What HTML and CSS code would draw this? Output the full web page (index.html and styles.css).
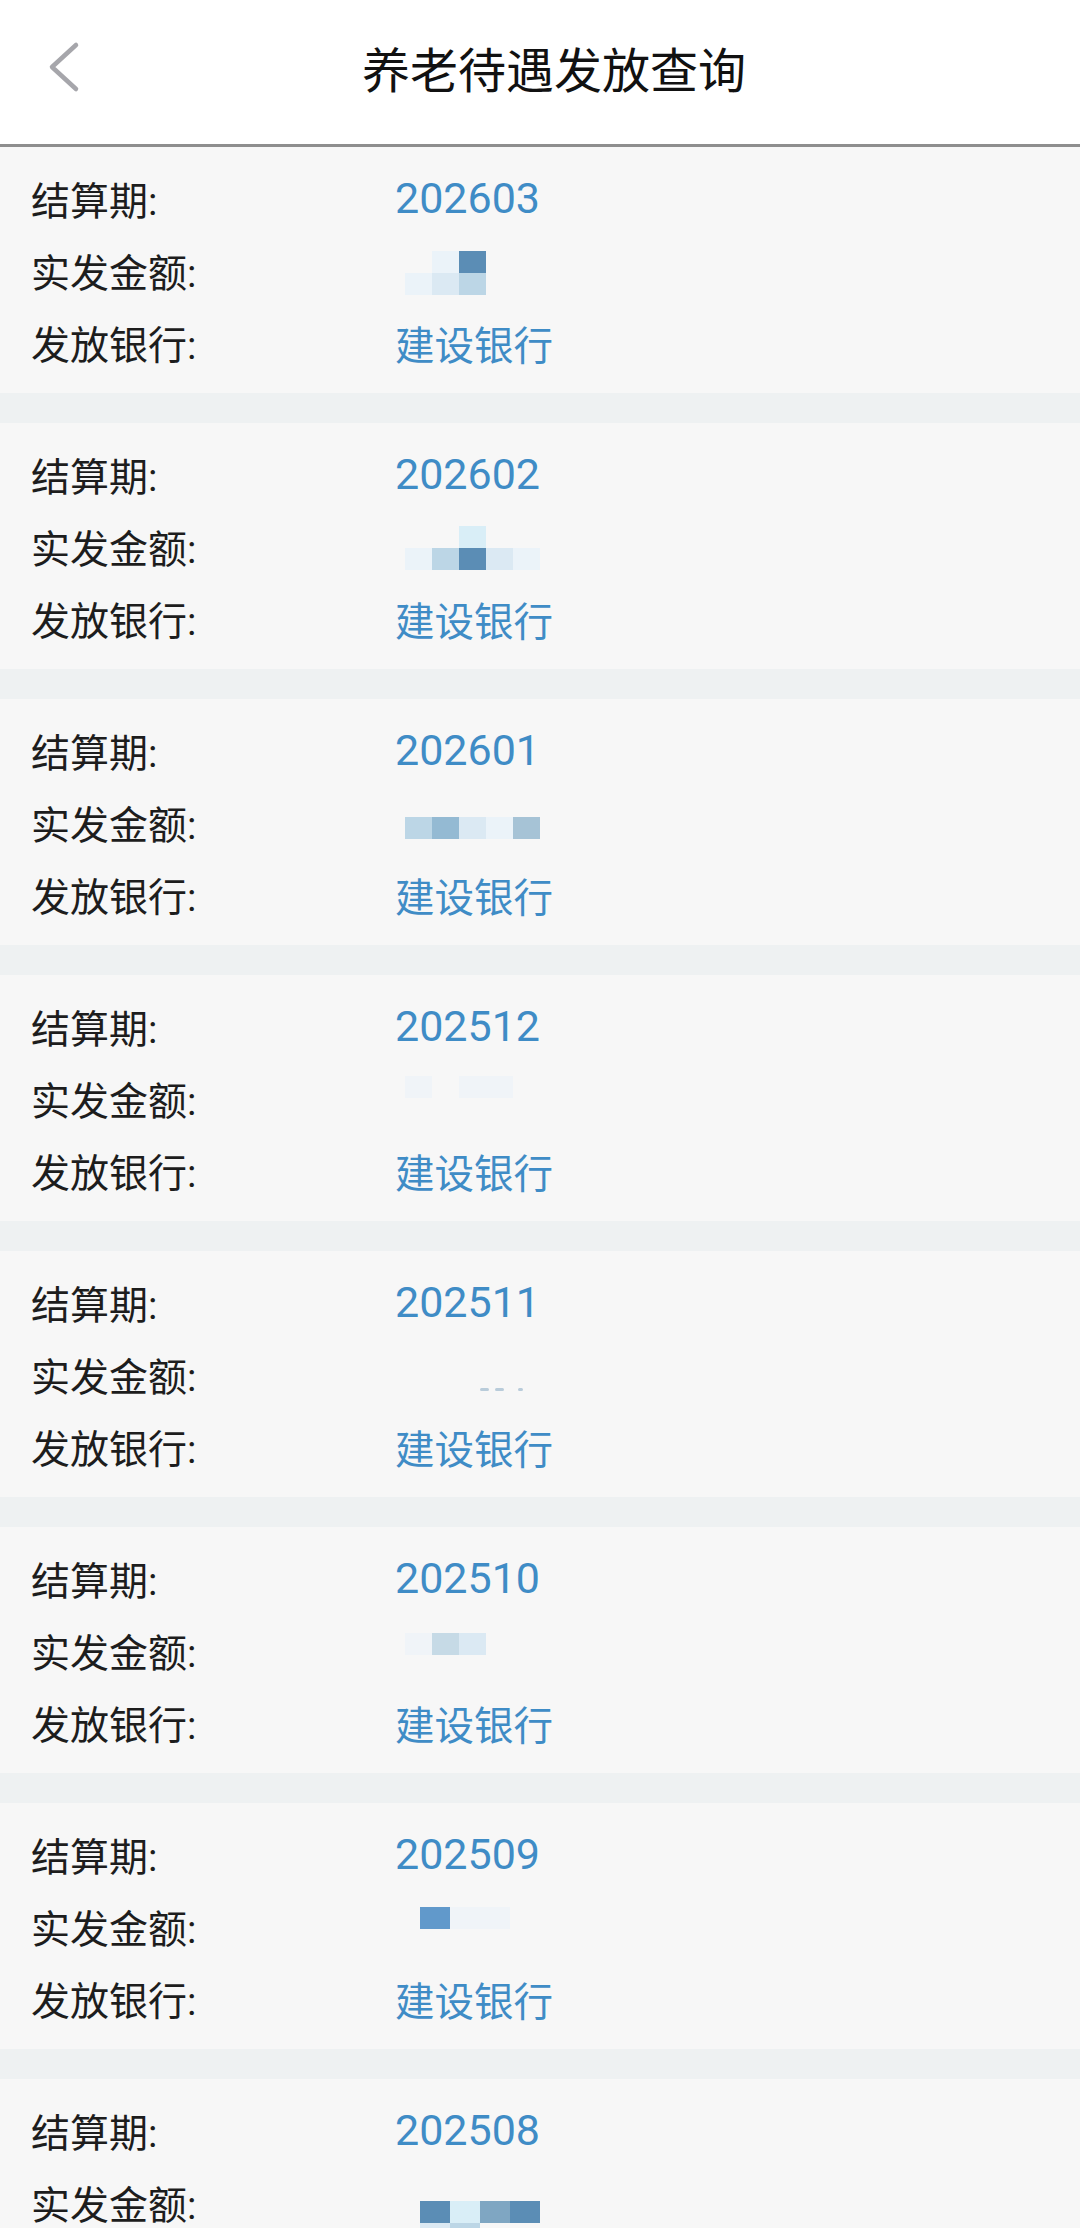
FILE: index.html
```html
<!DOCTYPE html>
<html lang="zh-CN">
<head>
    <meta charset="UTF-8">
    <meta name="viewport" content="width=device-width, initial-scale=1.0">
    <title>养老待遇发放查询</title>
    <link rel="stylesheet" href="styles.css">
</head>
<body>

    <div class="topbar">
        <div class="back">
            <svg width="40" height="60" viewBox="0 0 40 60">
                <polyline points="32,8 8,30 32,52" fill="none" stroke="#a6a6ab" stroke-width="4.5" stroke-linecap="round" stroke-linejoin="round"/>
            </svg>
        </div>
        <h1>养老待遇发放查询</h1>
        <div></div>
    </div>

    <div id="list">
        <div class="record">
            <div class="row"><span class="label">结算期:</span><span class="value num">202603</span></div>
            <div class="row"><span class="label">实发金额:</span>
                <span class="value">
                    <span class="mosaic sh-dn3">
                        <i></i><i class="m1"></i><i class="m5"></i><i></i>
                        <i></i><i class="m1"></i><i class="m2"></i><i class="m3"></i>
                    </span>
                </span>
            </div>
            <div class="row"><span class="label">发放银行:</span><span class="value">建设银行</span></div>
        </div>

        <div class="record">
            <div class="row"><span class="label">结算期:</span><span class="value num">202602</span></div>
            <div class="row"><span class="label">实发金额:</span>
                <span class="value">
                    <span class="mosaic sh-dn2">
                        <i></i><i></i><i class="m2c"></i><i></i><i></i>
                        <i class="m1"></i><i class="m3"></i><i class="m5"></i><i class="m2"></i><i class="m1"></i>
                    </span>
                </span>
            </div>
            <div class="row"><span class="label">发放银行:</span><span class="value">建设银行</span></div>
        </div>

        <div class="record">
            <div class="row"><span class="label">结算期:</span><span class="value num">202601</span></div>
            <div class="row"><span class="label">实发金额:</span>
                <span class="value">
                    <span class="mosaic sh-dn6">
                        <i class="m3"></i><i class="m4"></i><i class="m2"></i><i class="m1"></i><i class="m3b"></i>
                    </span>
                </span>
            </div>
            <div class="row"><span class="label">发放银行:</span><span class="value">建设银行</span></div>
        </div>

        <div class="record">
            <div class="row"><span class="label">结算期:</span><span class="value num">202512</span></div>
            <div class="row"><span class="label">实发金额:</span>
                <span class="value">
                    <span class="mosaic">
                        <i class="m0"></i><i></i><i class="m0"></i>
                        <i class="m0"></i><i></i><i></i>
                    </span>
                </span>
            </div>
            <div class="row"><span class="label">发放银行:</span><span class="value">建设银行</span></div>
        </div>

        <div class="record">
            <div class="row"><span class="label">结算期:</span><span class="value num">202511</span></div>
            <div class="row"><span class="label">实发金额:</span>
                <span class="value">
                    <span class="dashes"><b></b><b></b><b class="short"></b></span>
                </span>
            </div>
            <div class="row"><span class="label">发放银行:</span><span class="value">建设银行</span></div>
        </div>

        <div class="record">
            <div class="row"><span class="label">结算期:</span><span class="value num">202510</span></div>
            <div class="row"><span class="label">实发金额:</span>
                <span class="value">
                    <span class="mosaic sh-up6">
                        <i class="m0"></i><i class="m3c"></i><i class="m2"></i>
                    </span>
                </span>
            </div>
            <div class="row"><span class="label">发放银行:</span><span class="value">建设银行</span></div>
        </div>

        <div class="record">
            <div class="row"><span class="label">结算期:</span><span class="value num">202509</span></div>
            <div class="row"><span class="label">实发金额:</span>
                <span class="value">
                    <span class="mosaic wide sh-up8">
                        <i class="m5b"></i><i class="m0"></i><i class="m0"></i>
                    </span>
                </span>
            </div>
            <div class="row"><span class="label">发放银行:</span><span class="value">建设银行</span></div>
        </div>

        <div class="record">
            <div class="row"><span class="label">结算期:</span><span class="value num">202508</span></div>
            <div class="row"><span class="label">实发金额:</span>
                <span class="value">
                    <span class="mosaic wide sh-dn21">
                        <i class="m5"></i><i class="m2c"></i><i class="m4b"></i>
                        <i class="m5"></i><i class="m2"></i><i class="m3"></i>
                    </span>
                </span>
            </div>
            <div class="row"><span class="label">发放银行:</span><span class="value">建设银行</span></div>
        </div>
    </div>

</body>
</html>
```

FILE: styles.css
```css
body {
    margin: 0;
    padding: 0;
    background-color: #eef1f2;
    font-family: "Roboto", "Noto Sans CJK SC", sans-serif;
    color: #1d1d1d;
}

.topbar {
    display: grid;
    grid-template-columns: 120px 1fr 92px;
    align-items: center;
    height: 144px;
    background-color: #ffffff;
    border-bottom: 3px solid #8e8e8e;
}

.back {
    padding-left: 44px;
    padding-bottom: 10px;
    display: flex;
    align-items: center;
}

.back svg {
    display: block;
}

.topbar h1 {
    margin: 0 0 10px;
    text-align: center;
    font-family: "Noto Sans CJK SC", sans-serif;
    font-size: 48px;
    font-weight: 400;
    color: #111111;
}

#list {
    display: flex;
    flex-direction: column;
    gap: 30px;
}

.record {
    background-color: #f7f7f7;
    padding: 15px 0;
}

.row {
    display: grid;
    grid-template-columns: 364px 1fr;
    height: 72px;
    align-items: center;
    padding-left: 31px;
}

.label {
    font-size: 39px;
    color: #1d1d1d;
}

.value {
    font-size: 39.5px;
    color: #3f8cc6;
    display: flex;
    align-items: center;
    height: 72px;
}

.value.num {
    font-size: 43px;
}

/* blurred amount blocks */
.mosaic {
    display: grid;
    grid-template-columns: repeat(5, 27px);
    grid-auto-rows: 22px;
    margin-left: 10px;
}

.mosaic.wide {
    grid-template-columns: repeat(4, 30px);
    margin-left: 25px;
}

.mosaic i {
    display: block;
}

.m0 { background-color: #f0f4f8; }
.m1 { background-color: #ebf3f9; }
.m2 { background-color: #dbe9f3; }
.m2c { background-color: #d9eef7; }
.m3 { background-color: #bcd6e6; }
.m3b { background-color: #a6c3d6; }
.m3c { background-color: #c6dae6; }
.m4 { background-color: #94bad3; }
.m4b { background-color: #7fa6c2; }
.m5 { background-color: #5b8db5; }
.m5b { background-color: #6199cb; }

.sh-dn2 { transform: translateY(2px); }
.sh-dn3 { transform: translateY(3px); }
.sh-dn6 { transform: translateY(6px); }
.sh-dn21 { transform: translateY(21px); }
.sh-up6 { transform: translateY(-6px); }
.sh-up8 { transform: translateY(-8px); }

.dashes {
    display: flex;
    gap: 6px;
    margin-left: 85px;
    margin-top: 30px;
}

.dashes b {
    display: block;
    width: 9px;
    height: 3px;
    border-radius: 2px;
    background-color: #b9ccda;
}

.dashes b.short {
    width: 5px;
    margin-left: 8px;
}
```
